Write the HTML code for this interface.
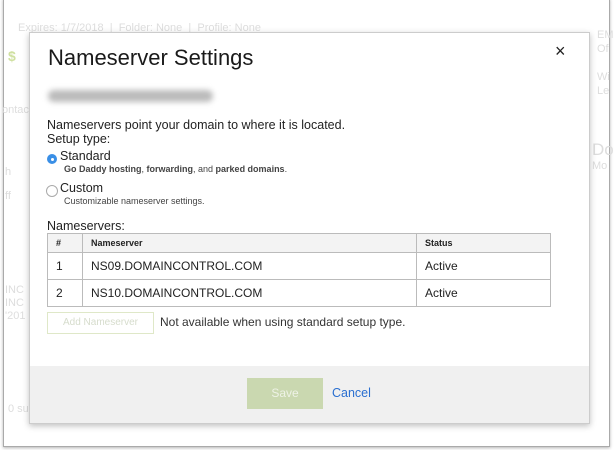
<!DOCTYPE html>
<html><head><style>
body{margin:0;width:614px;height:450px;background:#fff;font-family:"Liberation Sans",sans-serif;position:relative;overflow:hidden}
.frame{position:absolute;left:3px;top:-2px;width:605px;height:447px;border:1px solid #aaa;box-shadow:0 1px 3px rgba(0,0,0,.3);background:#fff}
.bg{position:absolute;color:#ddd;font-size:11px}
.modal{position:absolute;left:29px;top:32px;width:559px;height:390px;background:#fff;border:1px solid #ccc;box-shadow:0 2px 6px rgba(0,0,0,.25)}
.t{position:absolute;color:#222}
.foot{position:absolute;left:0;top:333px;width:559px;height:57px;background:#f0f0f0}
table{position:absolute;left:17px;top:200px;width:504px;border-collapse:collapse;font-size:12px;color:#222}
td,th{border:1px solid #bbb;padding:0 8px;text-align:left}
th{height:18px;font-size:9px;background:#f3f3f3}
td{height:26px}
</style></head><body>
<div class="frame"></div>
<div class="bg" style="left:18px;top:22px">Expires: 1/7/2018 &nbsp;| &nbsp;Folder: None &nbsp;| &nbsp;Profile: None</div>
<div class="bg" style="left:8px;top:48px;color:#cfe0a0;font-size:14px;font-weight:bold">$</div>
<div class="bg" style="left:2px;top:104px">ontac</div>
<div class="bg" style="left:5px;top:166px">h<br><br>ff</div>
<div class="bg" style="left:5px;top:284px;line-height:13px">INC<br>INC<br>'201</div>
<div class="bg" style="left:8px;top:403px">0 su</div>
<div class="bg" style="left:597px;top:28px;line-height:14px">EM<br>Of<br><br>Wi<br>Le</div>
<div class="bg" style="left:592px;top:140px;font-size:17px">Do</div>
<div class="bg" style="left:592px;top:160px">Mo</div>
<div class="modal">
<div class="t" style="left:18px;top:12px;font-size:22px;color:#1a1a1a">Nameserver Settings</div>
<div class="t" style="left:525px;top:8px;font-size:18px;color:#222">×</div>
<div style="position:absolute;left:18px;top:57px;width:165px;height:12px;border-radius:6px;background:#bbb;filter:blur(3px)"></div>
<div class="t" style="left:17px;top:85px;font-size:12.5px">Nameservers point your domain to where it is located.</div>
<div class="t" style="left:17px;top:99px;font-size:12.5px">Setup type:</div>
<div style="position:absolute;left:17px;top:121px;width:10px;height:10px;border-radius:50%;background:#3a8fe6"><div style="position:absolute;left:3.5px;top:3.5px;width:3px;height:3px;border-radius:50%;background:#fff"></div></div>
<div class="t" style="left:30px;top:116px;font-size:12.5px">Standard</div>
<div class="t" style="left:34px;top:131px;font-size:9px;color:#444"><b>Go Daddy hosting</b>, <b>forwarding</b>, and <b>parked domains</b>.</div>
<div style="position:absolute;left:16px;top:152px;width:10px;height:10px;border-radius:50%;border:1px solid #aaa"></div>
<div class="t" style="left:30px;top:148px;font-size:12.5px">Custom</div>
<div class="t" style="left:34px;top:163px;font-size:9px;color:#444">Customizable nameserver settings.</div>
<div class="t" style="left:17px;top:186px;font-size:12.5px">Nameservers:</div>
<table>
<tr><th style="width:18px">#</th><th>Nameserver</th><th style="width:117px">Status</th></tr>
<tr><td>1</td><td>NS09.DOMAINCONTROL.COM</td><td>Active</td></tr>
<tr><td>2</td><td>NS10.DOMAINCONTROL.COM</td><td>Active</td></tr>
</table>
<div style="position:absolute;left:17px;top:279px;width:105px;height:20px;border:1px solid #dfe8c8;color:#d6dccc;font-size:10px;line-height:20px;text-align:center">Add Nameserver</div>
<div class="t" style="left:130px;top:282px;font-size:12px;color:#333">Not available when using standard setup type.</div>
<div class="foot">
<div style="position:absolute;left:217px;top:12px;width:76px;height:31px;background:#cad8b0;color:#eef2e6;font-size:12px;line-height:31px;text-align:center">Save</div>
<div style="position:absolute;left:302px;top:20px;color:#2a6fd0;font-size:12.5px">Cancel</div>
</div>
</div>
</body></html>
